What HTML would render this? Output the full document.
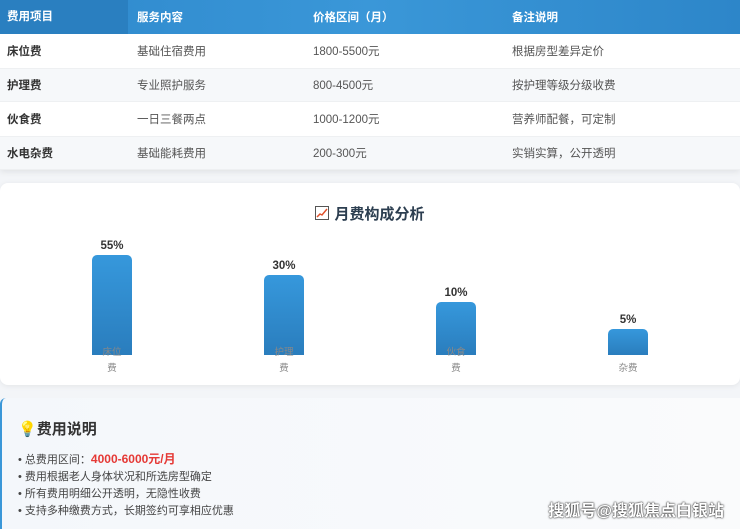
<!DOCTYPE html><html><head><meta charset="utf-8"><style>
*{margin:0;padding:0;box-sizing:border-box}
body{width:740px;height:529px;overflow:hidden;background:#f3f5f8;font-family:"Liberation Sans","Noto Sans CJK SC",sans-serif;position:relative}
.tbl{position:absolute;left:0;top:0;width:740px;background:#fff;box-shadow:0 2px 6px rgba(0,0,0,.08)}
.row{display:flex;height:34px;align-items:center;font-size:11.5px;color:#555}
.row div{padding-left:7px}
.c1{width:128px}.c2{width:175px;padding-left:9px!important}.c3{width:199px;padding-left:10px!important}.c4{flex:1;padding-left:10px!important}
.hd{background:linear-gradient(90deg,#2e88cc,#3a97d8 50%,#2d86c9);color:#fff;font-weight:bold}
.hd .c1{background:#2a7fc0;height:34px;line-height:34px}
.row .c1{font-weight:bold;color:#333}
.hd .c1{color:#fff}
.alt{background:#f6f8fa;border-top:1px solid #eef0f2;border-bottom:1px solid #eef0f2}
.card{position:absolute;left:0;top:183px;width:740px;height:202px;background:#fff;border-radius:8px;box-shadow:0 1px 6px rgba(0,0,0,.07)}
.title{position:absolute;top:20px;left:0;width:740px;text-align:center;font-size:15px;font-weight:bold;color:#2c3e50}
.bar{position:absolute;width:40px;bottom:30px;border-radius:5px 5px 0 0;background:linear-gradient(#3698dc,#2a7dbd)}
.pct{position:absolute;width:60px;text-align:center;font-size:11.5px;font-weight:bold;color:#333}
.lb{position:absolute;width:40px;text-align:center;font-size:9.5px;color:#888;line-height:16px}
.note{position:absolute;left:0;top:398px;width:740px;height:131px;background:linear-gradient(90deg,#f4f7fb,#fafbfc);border-left:2px solid #3a97d8;border-radius:6px 0 0 0}
.note h3{position:absolute;left:16px;top:20px;font-size:15px;color:#333}
.note ul{position:absolute;left:16px;top:53px;list-style:none;font-size:11px;color:#444;line-height:17px}
.wm{position:absolute;right:16px;bottom:8px;font-size:16px;color:#fff;text-shadow:0 0 2px #333,0 0 1px #000;font-weight:bold}
</style></head><body>
<div class="tbl">
<div class="row hd"><div class="c1">费用项目</div><div class="c2">服务内容</div><div class="c3">价格区间（月）</div><div class="c4">备注说明</div></div>
<div class="row"><div class="c1">床位费</div><div class="c2">基础住宿费用</div><div class="c3">1800-5500元</div><div class="c4">根据房型差异定价</div></div>
<div class="row alt"><div class="c1">护理费</div><div class="c2">专业照护服务</div><div class="c3">800-4500元</div><div class="c4">按护理等级分级收费</div></div>
<div class="row"><div class="c1">伙食费</div><div class="c2">一日三餐两点</div><div class="c3">1000-1200元</div><div class="c4">营养师配餐，可定制</div></div>
<div class="row alt"><div class="c1">水电杂费</div><div class="c2">基础能耗费用</div><div class="c3">200-300元</div><div class="c4">实销实算，公开透明</div></div>
</div>
<div class="card">
<div class="title"><svg width="14" height="14" style="vertical-align:-1px;margin-right:5px"><rect x=".5" y=".5" width="13" height="13" fill="#fff" stroke="#555"/><path d="M2 11 L5 8 L7 9 L12 3" stroke="#e0502a" stroke-width="1.5" fill="none"/></svg>月费构成分析</div>
<div class="pct" style="left:82px;top:57px">55%</div><div class="bar" style="left:92px;height:100px"></div>
<div class="pct" style="left:254px;top:77px">30%</div><div class="bar" style="left:264px;height:80px"></div>
<div class="pct" style="left:426px;top:104px">10%</div><div class="bar" style="left:436px;height:53px"></div>
<div class="pct" style="left:598px;top:131px">5%</div><div class="bar" style="left:608px;height:26px"></div>
<div class="lb" style="left:92px;top:162px">床位<br>费</div>
<div class="lb" style="left:264px;top:162px">护理<br>费</div>
<div class="lb" style="left:436px;top:162px">伙食<br>费</div>
<div class="lb" style="left:608px;top:178px">杂费</div>
</div>
<div class="note">
<h3><span style="color:#f0b400">💡</span>费用说明</h3>
<ul>
<li>• 总费用区间：<b style="color:#e53935;font-size:12px">4000-6000元/月</b></li>
<li>• 费用根据老人身体状况和所选房型确定</li>
<li>• 所有费用明细公开透明，无隐性收费</li>
<li>• 支持多种缴费方式，长期签约可享相应优惠</li>
</ul>
<div class="wm">搜狐号@搜狐焦点白银站</div>
</div>
</body></html>
